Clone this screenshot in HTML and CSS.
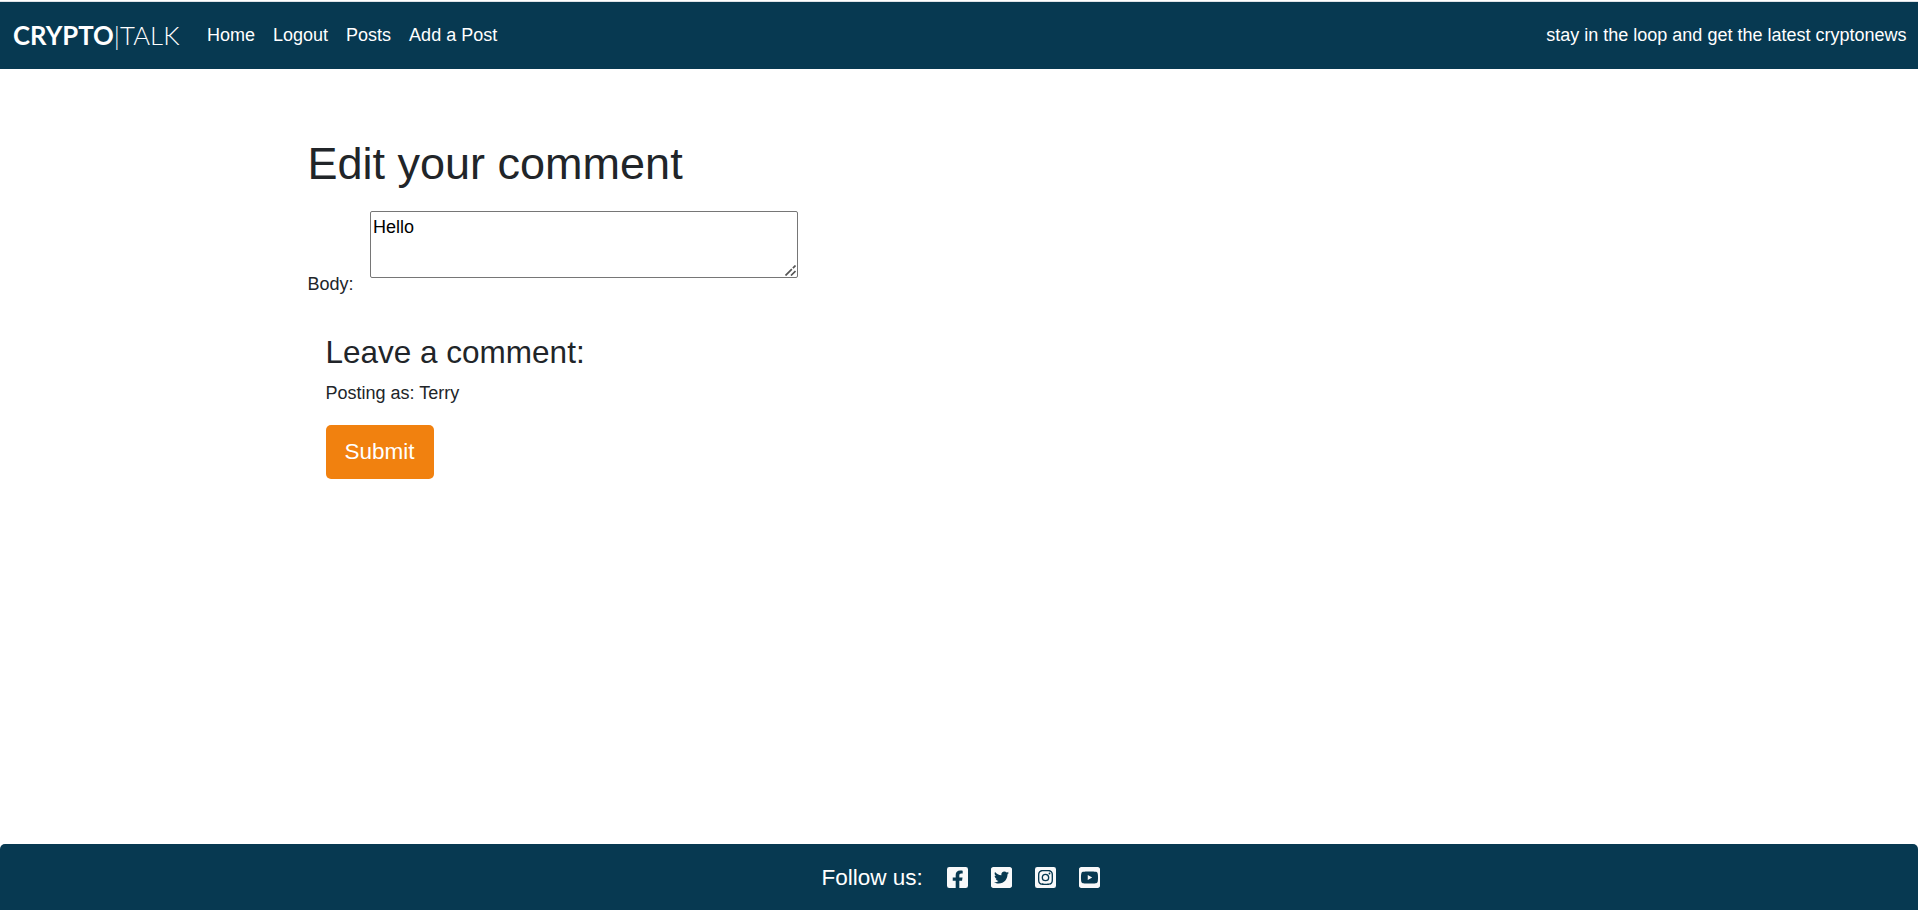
FILE: index.html
```html
<!DOCTYPE html>
<html lang="en">
<head>
<meta charset="utf-8">
<title>Crypto Talk</title>
<link rel="stylesheet" href="styles.css">
</head>
<body>
<nav class="navbar">
  <a class="brand"><strong>CRYPTO</strong>|TALK</a>
  <ul class="nav-links">
    <li>Home</li>
    <li>Logout</li>
    <li>Posts</li>
    <li>Add a Post</li>
  </ul>
  <span class="tagline">stay in the loop and get the latest cryptonews</span>
</nav>
<main class="content">
  <h1>Edit your comment</h1>
  <form>
    <div class="field">
      <label for="body">Body:</label>
      <div class="editor">
        <textarea id="body">Hello</textarea>
        <svg class="grip" viewBox="0 0 11 11"><path d="M.5 10.500 10.500.5M6 10.500l4.500-4.500"/></svg>
      </div>
    </div>
    <section class="comment">
      <h3>Leave a comment:</h3>
      <p>Posting as: Terry</p>
      <button type="button" class="submit">Submit</button>
    </section>
  </form>
</main>
<footer class="footer">
  <span class="follow">Follow us:</span>
  <svg class="social" viewBox="0 32 448 448"><path d="M400 32H48A48 48 0 0 0 0 80v352a48 48 0 0 0 48 48h137.25V327.69h-63V256h63v-54.64c0-62.15 37-96.48 93.67-96.48 27.14 0 55.52 4.84 55.52 4.84v61h-31.27c-30.81 0-40.42 19.12-40.42 38.73V256h68.78l-11 71.69h-57.78V480H400a48 48 0 0 0 48-48V80a48 48 0 0 0-48-48z"/></svg>
  <svg class="social" viewBox="0 32 448 448"><path d="M400 32H48C21.500 32 0 53.500 0 80v352c0 26.500 21.500 48 48 48h352c26.500 0 48-21.500 48-48V80c0-26.500-21.500-48-48-48zm-48.900 158.800c.2 2.800.2 5.700.2 8.500 0 86.700-66 186.600-186.600 186.600-37.200 0-71.700-10.800-100.700-29.400 5.300.6 10.400.8 15.800.8 30.700 0 58.900-10.400 81.400-28-28.800-.6-53-19.500-61.300-45.500 10.100 1.500 19.200 1.500 29.600-1.200-30-6.100-52.500-32.500-52.500-64.400v-.8c8.700 4.900 18.900 7.900 29.600 8.300a65.447 65.447 0 0 1-29.200-54.600c0-12.200 3.200-23.400 8.900-33.100 32.300 39.800 80.800 65.800 135.200 68.600-9.300-44.500 24-80.600 64-80.600 18.900 0 35.900 7.900 47.900 20.700 14.800-2.800 29-8.300 41.600-15.800-4.900 15.200-15.200 28-28.800 36.100 13.200-1.400 26-5.100 37.800-10.200-8.900 13.100-20.100 24.700-32.900 34z"/></svg>
  <svg class="social" viewBox="0 32 448 448"><path d="M224 202.660A53.340 53.340 0 1 0 277.360 256 53.380 53.380 0 0 0 224 202.660zm124.710-41a54 54 0 0 0-30.410-30.410c-21-8.290-71-6.430-94.300-6.430s-73.250-1.930-94.310 6.430a54 54 0 0 0-30.410 30.410c-8.280 21-6.430 71.050-6.430 94.330s-1.850 73.270 6.470 94.340a54 54 0 0 0 30.410 30.410c21 8.290 71 6.430 94.310 6.430s73.240 1.930 94.300-6.430a54 54 0 0 0 30.410-30.410c8.350-21 6.430-71.050 6.430-94.330s1.920-73.260-6.430-94.330zM224 338a82 82 0 1 1 82-82 81.900 81.900 0 0 1-82 82zm85.380-148.300a19.140 19.140 0 1 1 19.130-19.140 19.100 19.100 0 0 1-19.090 19.180zM400 32H48A48 48 0 0 0 0 80v352a48 48 0 0 0 48 48h352a48 48 0 0 0 48-48V80a48 48 0 0 0-48-48zm-17.120 290c-1.290 25.630-7.140 48.340-25.850 67s-41.400 24.630-67 25.850c-26.410 1.490-105.590 1.490-132 0-25.630-1.290-48.260-7.150-67-25.850s-24.630-41.420-25.850-67c-1.490-26.420-1.490-105.610 0-132 1.290-25.630 7.070-48.340 25.850-67s41.470-24.560 67-25.780c26.410-1.490 105.590-1.490 132 0 25.630 1.290 48.330 7.150 67 25.850s24.630 41.420 25.850 67.050c1.490 26.320 1.490 105.440 0 131.880z"/></svg>
  <svg class="social" viewBox="0 32 448 448"><path d="M186.800 202.100l95.200 54.100-95.200 54.100V202.100zM448 80v352c0 26.500-21.500 48-48 48H48c-26.500 0-48-21.500-48-48V80c0-26.500 21.500-48 48-48h352c26.500 0 48 21.500 48 48zm-42 176.300s0-59.600-7.600-88.200c-4.200-15.800-16.500-28.200-32.200-32.400C337.900 128 224 128 224 128s-113.900 0-142.200 7.700c-15.700 4.200-28 16.600-32.200 32.400-7.600 28.500-7.600 88.200-7.600 88.200s0 59.600 7.600 88.200c4.200 15.800 16.500 27.700 32.200 31.900C110.100 384 224 384 224 384s113.900 0 142.200-7.700c15.700-4.200 28-16.100 32.200-31.900 7.600-28.500 7.600-88.100 7.600-88.100z"/></svg>
</footer>
</body>
</html>
```

FILE: styles.css
```css
* { box-sizing: border-box; }
html { font-size: 18px; }
body {
  margin: 0;
  height: 910px;
  display: flex;
  flex-direction: column;
  overflow: hidden;
  border-top: 1px solid #fff;
  font-family: "Liberation Sans", Arial, sans-serif;
  line-height: 1.5;
  color: #212529;
  background: #fff;
}
h1, h3, p, ul { margin: 0; padding: 0; font-weight: 400; }
.navbar {
  flex: none;
  height: 68px;
  display: flex;
  align-items: center;
  padding: 0 11.5px 0 13px;
  border-top: 1px solid #dee2e6;
  background: #073951;
  color: #fff;
}
.brand {
  font-family: Lato, sans-serif;
  font-size: 25.7px;
  font-weight: 300;
  letter-spacing: 0.1px;
  line-height: 40px;
  width: 194px;
  padding-bottom: 1px;
  white-space: nowrap;
}
.brand strong { font-weight: 700; letter-spacing: 0; }
.nav-links { display: flex; gap: 18px; list-style: none; }
.tagline { margin-left: auto; }
.content { flex: 1; padding: 68px 0 0 307.5px; }
h1 { font-size: 45px; line-height: 54px; }
.field { display: flex; align-items: flex-end; gap: 16.5px; margin-top: 20px; height: 87px; }
.editor { position: relative; align-self: flex-start; width: 428px; height: 67px; }
.grip {
  position: absolute;
  right: 2px;
  bottom: 2px;
  width: 11px;
  height: 11px;
  fill: none;
  stroke: #555;
  stroke-width: 1.7;
  stroke-dasharray: 9 1.5;
}
textarea {
  display: block;
  width: 100%;
  height: 100%;
  margin: 0;
  padding: 2px;
  border: 1px solid #767676;
  border-radius: 2px;
  resize: none;
  font: inherit;
  color: #000;
}
.comment { padding: 35px 0 0 18px; }
h3 { font-size: 31.5px; line-height: 38px; }
.comment p { margin-top: 9px; }
.submit {
  width: 108px;
  height: 54px;
  margin-top: 18px;
  padding: 0;
  border: 0;
  border-radius: 5px;
  background: #f1810f;
  color: #fff;
  font: 22.5px/34px "Liberation Sans", Arial, sans-serif;
}
.footer {
  flex: none;
  height: 66px;
  display: flex;
  align-items: center;
  padding-left: 821.5px;
  border-radius: 5px 5px 0 0;
  background: #073951;
  color: #fff;
}
.follow { width: 125px; padding-top: 2px; font-size: 22.5px; }
.social { width: 21px; height: 21px; margin-right: 23px; fill: #f8f9fa; }
```
